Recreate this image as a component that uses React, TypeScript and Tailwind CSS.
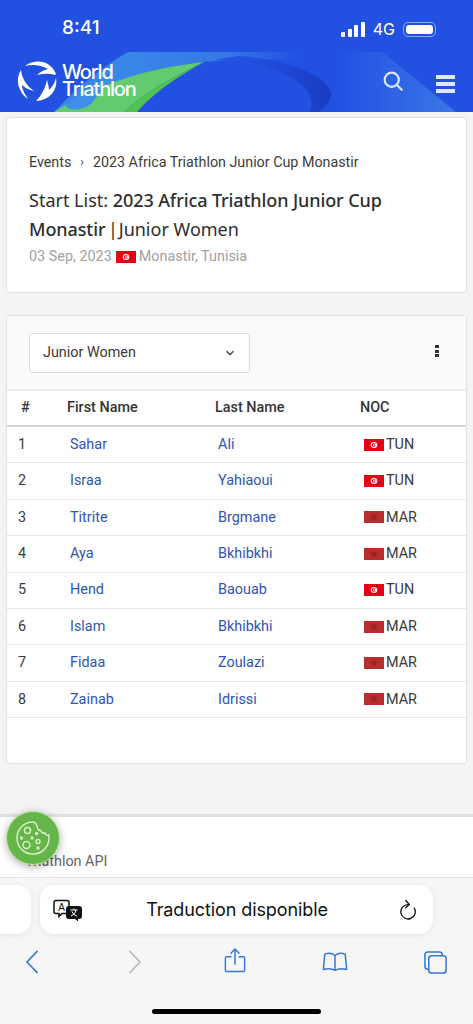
const tunFlag = (
  <svg viewBox="0 0 20 13" preserveAspectRatio="none" className="w-full h-full block">
    <rect width="20" height="13" fill="#e70013" />
    <circle cx="10" cy="6.5" r="3.3" fill="#fff" />
    <circle cx="10" cy="6.5" r="2.2" fill="#e70013" />
    <circle cx="10.7" cy="6.5" r="1.7" fill="#fff" />
    <circle cx="10.6" cy="6.5" r="0.8" fill="#e70013" />
  </svg>
);

const marFlag = (
  <svg viewBox="0 0 20 13" preserveAspectRatio="none" className="w-full h-full block">
    <rect width="20" height="13" fill="#bb2c2c" />
    <path d="M10 3.2l2 6-5.200-3.700h6.400l-5.200 3.700z" fill="none" stroke="#7c2a24" strokeWidth="0.8" />
  </svg>
);

const rows = [
  ['1', 'Sahar', 'Ali', 'TUN'],
  ['2', 'Israa', 'Yahiaoui', 'TUN'],
  ['3', 'Titrite', 'Brgmane', 'MAR'],
  ['4', 'Aya', 'Bkhibkhi', 'MAR'],
  ['5', 'Hend', 'Baouab', 'TUN'],
  ['6', 'Islam', 'Bkhibkhi', 'MAR'],
  ['7', 'Fidaa', 'Zoulazi', 'MAR'],
  ['8', 'Zainab', 'Idrissi', 'MAR'],
];

const Header = () => (
  <header className="relative h-[112px] bg-[#2251e2] overflow-hidden">
    {/* swoosh artwork behind the logo */}
    <svg viewBox="0 0 473 112" className="absolute inset-0 w-full h-full">
      <defs>
        <linearGradient id="bandL" x1="128" x2="300" y1="0" y2="0" gradientUnits="userSpaceOnUse">
          <stop offset="0" stopColor="#3a86e8" />
          <stop offset="0.55" stopColor="#3579e6" />
          <stop offset="1" stopColor="#2251e2" />
        </linearGradient>
        <linearGradient id="bandR" x1="340" x2="450" y1="0" y2="0" gradientUnits="userSpaceOnUse">
          <stop offset="0" stopColor="#2251e2" />
          <stop offset="1" stopColor="#3a76e8" />
        </linearGradient>
        <linearGradient id="arc" x1="240" x2="332" y1="0" y2="0" gradientUnits="userSpaceOnUse">
          <stop offset="0" stopColor="#2251e2" />
          <stop offset="1" stopColor="#1a3cc4" />
        </linearGradient>
      </defs>
      <path d="M128 52 H300 V60 C270 58 235 59 204 62 C150 68 100 84 54 112 C75 90 100 68 128 52Z" fill="url(#bandL)" />
      <path d="M340 52 H382 L456 112 H318 C340 95 345 70 340 52Z" fill="url(#bandR)" />
      <path d="M240 56 C285 60 325 74 331 92 C332 100 326 108 318 112 L310 112 C316 96 305 82 275 70 C260 64 240 60 215 60 C225 58 232 57 240 56Z" fill="url(#arc)" />
      <path d="M204 62 C150 68 100 82 54 112 H124 C145 92 175 76 204 62Z" fill="#62cb70" />
      <path d="M204 62 C175 76 145 92 124 112 H137 C152 94 178 76 204 62Z" fill="#4fc24f" />
      <path d="M118 74 C100 80 80 92 65 106 C72 112 84 110 92 103 C100 92 108 82 118 74Z" fill="#3f8ee8" />
    </svg>
    <div className="relative h-[50px] pl-[62px] pr-[37px] flex items-end justify-between text-white">
      <span className="font-['Inter',sans-serif] text-[19px] font-medium leading-[24px] mb-[10px]">8:41</span>
      <div className="flex items-center gap-[8px] mb-[13px]">
        <div className="flex items-end gap-[2.500px] h-[15px]">
          <span className="w-[4px] h-[5px] bg-white rounded-[1px]" />
          <span className="w-[4px] h-[8px] bg-white rounded-[1px]" />
          <span className="w-[4px] h-[12px] bg-white rounded-[1px]" />
          <span className="w-[4px] h-[15px] bg-white rounded-[1px]" />
        </div>
        <span className="font-['Inter',sans-serif] text-[16px] leading-[15px]">4G</span>
        <div className="w-[33px] h-[15px] rounded-[5px] border border-[#8fa9f0] p-[2px]">
          <div className="w-full h-full rounded-[3px] bg-white" />
        </div>
      </div>
    </div>
    <div className="relative h-[62px] pl-[16px] pr-[18px] flex items-start justify-between text-white">
      <div className="flex items-center gap-[4px] mt-[10px]">
        <svg viewBox="0 0 42 42" className="w-[42px] h-[42px]">
          <path d="M9 6 C18 -1 34 -1 40 14 L39 15 C33 13 27 14 21 15 C24 12 28 10 32 9 C25 5 17 4 9 6Z" fill="#fff" />
          <path d="M5 10 C6 19 11 26 18 31 C13 30 9 28 6 25 C6 29 8 33 12 39 C4 34 -2 21 5 10Z" fill="#fff" />
          <path d="M40 18 C42 29 35 40 20 41 C25 36 29 29 31 20 C32 24 33 27 33 30 C36 27 39 23 40 18Z" fill="#fff" />
        </svg>
        <div className="font-['Inter',sans-serif] text-[20px] font-medium leading-[17px] tracking-[-1.200px]">
          <div>World</div>
          <div>Triathlon</div>
        </div>
      </div>
      <div className="flex items-center gap-[33px] mt-[18px]">
        <svg viewBox="0 0 24 24" className="w-[20px] h-[20px]" fill="none" stroke="#dfe8fb" strokeWidth="2.6" strokeLinecap="round">
          <circle cx="10.5" cy="10.5" r="8.500" />
          <path d="M17 17L22.500 22.500" />
        </svg>
        <div className="flex flex-col gap-[3px] mt-[7px]">
          <span className="w-[19px] h-[4px] bg-[#dfe8fb]" />
          <span className="w-[19px] h-[4px] bg-[#dfe8fb]" />
          <span className="w-[19px] h-[4px] bg-[#dfe8fb]" />
        </div>
      </div>
    </div>
  </header>
);

const TitleCard = () => (
  <section className="mx-[7px] mt-[6px] h-[174px] bg-white rounded-[3px] shadow-[0_0_2px_rgba(0,0,0,0.25)] px-[22px] pt-[34px]">
    <div className="flex items-center text-[14.300px] leading-[20px] text-[#3c3c3c]">
      <span>Events</span>
      <span className="mx-[9px] text-[12px]">›</span>
      <span>2023 Africa Triathlon Junior Cup Monastir</span>
    </div>
    <h1 className="mt-[14px] font-['Noto_Sans',sans-serif] text-[18px] leading-[29px] text-[#2e2e2e] font-normal">
      Start List: <b className="font-medium tracking-[-0.1px]">2023 Africa Triathlon Junior Cup Monastir</b> <span className="-ml-[2px] -mr-[4px]">|</span> Junior Women
    </h1>
    <div className="mt-[3px] flex items-center text-[14.400px] leading-[20px] text-[#a1a1a1]">
      <span>03 Sep, 2023</span>
      <span className="w-[20px] h-[12px] ml-[4px] mr-[3px]">{tunFlag}</span>
      <span>Monastir, Tunisia</span>
    </div>
  </section>
);

const StartList = () => (
  <section className="mx-[7px] mt-[24px] h-[447px] bg-white rounded-[3px] shadow-[0_0_2px_rgba(0,0,0,0.25)]">
    <div className="h-[75px] bg-[#fafafa] rounded-t-[3px] pl-[22px] pr-[27px] pt-[17px] flex items-start justify-between border-b-[2px] border-[#ececec]">
      <div className="w-[221px] h-[40px] bg-white border border-[#dcdcdc] rounded-[3px] pl-[13px] pr-[14px] flex items-center justify-between text-[14.400px] text-[#3a3a3a]">
        <span>Junior Women</span>
        <svg viewBox="0 0 12 12" className="w-[10px] h-[10px]" fill="none" stroke="#333" strokeWidth="1.6">
          <path d="M2 4l4 4 4-4" />
        </svg>
      </div>
      <div className="flex flex-col gap-[1.500px] mt-[12px]">
        <span className="w-[4px] h-[3px] bg-[#333]" />
        <span className="w-[4px] h-[3px] bg-[#333]" />
        <span className="w-[4px] h-[3px] bg-[#333]" />
      </div>
    </div>
    <div className="grid grid-cols-[60px_148px_145px_1fr] h-[36px] items-center border-b-[2px] border-[#d4d4d4] text-[14.400px] font-medium text-[#333]">
      <span className="pl-[14px]">#</span>
      <span>First Name</span>
      <span>Last Name</span>
      <span>NOC</span>
    </div>
    {rows.map(([n, first, last, noc]) => (
      <div key={n} className="grid grid-cols-[63px_148px_146px_1fr] h-[36.400px] items-center border-b border-[#e6e6e6] text-[14.400px] text-[#3a3a3a]">
        <span className="pl-[11px]">{n}</span>
        <span className="text-[#2f55b5]">{first}</span>
        <span className="text-[#2f55b5]">{last}</span>
        <span className="flex items-center gap-[2px]">
          <span className="w-[20px] h-[12px]">{noc === 'TUN' ? tunFlag : marFlag}</span>
          {noc}
        </span>
      </div>
    ))}
  </section>
);

const BrowserBar = () => (
  <div className="h-[147px] bg-[#f6f6f6] border-t border-[#e4e4e4]">
    <div className="mt-[7px] flex gap-[9px] h-[49px]">
      <div className="w-[31px] bg-white rounded-r-[14px] shadow-[0_1px_6px_rgba(0,0,0,0.08)]" />
      <div className="w-[393px] bg-white rounded-[14px] shadow-[0_1px_6px_rgba(0,0,0,0.08)] pl-[13px] pr-[16px] flex items-center justify-between">
        <svg viewBox="0 0 30 22" className="w-[30px] h-[22px]">
          <path d="M3 1.500h11a2 2 0 0 1 2 2v9a2 2 0 0 1-2 2H9l-3 3v-3H3a2 2 0 0 1-2-2v-9a2 2 0 0 1 2-2z" fill="#fff" stroke="#111" strokeWidth="1.500" />
          <text x="8.500" y="11.500" fontSize="10" textAnchor="middle" fontFamily="Liberation Sans, sans-serif" fill="#111">A</text>
          <path d="M16 7h10a3 3 0 0 1 3 3v7a3 3 0 0 1-3 3h-1v2.500L22 20h-6a3 3 0 0 1-3-3v-7a3 3 0 0 1 3-3z" fill="#111" />
          <path d="M17.500 11h7M21 9.500V11M23 11c-.5 3-2.500 5-5 6M19 12.500c.8 2.200 2.600 3.800 5 4.500" stroke="#fff" strokeWidth="1" fill="none" />
        </svg>
        <span className="font-['Inter',sans-serif] text-[18px] text-[#111] tracking-[-0.1px] mr-[8px]">Traduction disponible</span>
        <svg viewBox="0 0 20 22" className="w-[18px] h-[21px]" fill="none" stroke="#111" strokeWidth="1.500" strokeLinecap="round" strokeLinejoin="round">
          <path d="M10 5.500a8 8 0 1 0 7 4" />
          <path d="M7.500 1l4 4.500-4 3.500" />
        </svg>
      </div>
    </div>
    <div className="mt-[7px] pl-[26px] flex items-center h-[42px]">
      <svg viewBox="0 0 12 24" className="w-[12px] h-[24px]" fill="none" stroke="#3478d8" strokeWidth="1.800" strokeLinecap="round" strokeLinejoin="round">
        <path d="M11 1.500L1 12l10 10.500" />
      </svg>
      <svg viewBox="0 0 12 24" className="w-[12px] h-[24px] ml-[91px]" fill="none" stroke="#b9b9b9" strokeWidth="1.800" strokeLinecap="round" strokeLinejoin="round">
        <path d="M1 1.500L11 12 1 22.500" />
      </svg>
      <svg viewBox="0 0 24 28" className="w-[22px] h-[27px] ml-[83px] mb-[3px]" fill="none" stroke="#3478d8" strokeWidth="1.600" strokeLinecap="round" strokeLinejoin="round">
        <path d="M7.500 10H3a1.500 1.500 0 0 0-1.500 1.500v13A1.500 1.500 0 0 0 3 26h18a1.500 1.500 0 0 0 1.500-1.500v-13A1.500 1.500 0 0 0 21 10h-4.500" />
        <path d="M12 18V2M7.500 6L12 1.500 16.500 6" />
      </svg>
      <svg viewBox="0 0 28 22" className="w-[26px] h-[22px] ml-[76px]" fill="none" stroke="#3478d8" strokeWidth="1.600" strokeLinejoin="round">
        <path d="M14 4C11 1.500 6 1.500 3 2.500L1.500 19c4-1 9-1 12.500 1 3.500-2 8.500-2 12.500-1L25 2.500C22 1.500 17 1.500 14 4zM14 4v16" />
      </svg>
      <svg viewBox="0 0 26 26" className="w-[25px] h-[25px] ml-[75px]" fill="none" stroke="#3478d8" strokeWidth="1.600">
        <path d="M20 6V5a3 3 0 0 0-3-3H5a3 3 0 0 0-3 3v12a3 3 0 0 0 3 3h1" />
        <rect x="6" y="6" width="18" height="18" rx="3" />
      </svg>
    </div>
    <div className="mt-[26px] mx-auto w-[169px] h-[5px] rounded-full bg-black" />
  </div>
);

const CookieButton = () => (
  <div className="absolute left-[6px] top-[811px] w-[54px] h-[54px] rounded-full bg-[#65b54a] border-[1.500px] border-[#b9e6a4] shadow-[0_2px_8px_rgba(0,0,0,0.3)] flex items-center justify-center">
    <svg viewBox="0 0 40 40" className="w-[40px] h-[40px]" fill="none" stroke="#d3efc3" strokeWidth="1.500">
      <path d="M20 4C11 4 4 11 4 20s7 16 16 16 16-7 16-16c0-1-.1-2-.3-3-1.700.5-3.300-.4-3.700-2-2 .4-3.700-.6-4.200-2.400-2.200 0-3.600-1.400-3.400-3.600C22.800 4.500 21.600 4 20 4z" />
      <circle cx="14.500" cy="12.500" r="3" />
      <circle cx="13.500" cy="27" r="3.500" />
      <circle cx="25" cy="23.500" r="2" />
      <circle cx="23.500" cy="15.500" r="1" fill="#d3efc3" />
      <circle cx="8.500" cy="20" r="1" fill="#d3efc3" />
      <circle cx="19" cy="20" r="1" fill="#d3efc3" />
      <circle cx="25" cy="30" r="1" fill="#d3efc3" />
    </svg>
  </div>
);

export default function App() {
  return (
    <div className="relative w-[473px] h-[1024px] overflow-hidden bg-[#f4f4f4] font-['Roboto',sans-serif]">
      <Header />
      <TitleCard />
      <StartList />
      <footer className="mt-[51px] h-[63px] bg-white border-t-[3px] border-[#e0e0e0] flex items-end pb-[4px] pl-[25px] text-[14.400px] text-[#666]">
        Triathlon API
      </footer>
      <BrowserBar />
      <CookieButton />
    </div>
  );
}
